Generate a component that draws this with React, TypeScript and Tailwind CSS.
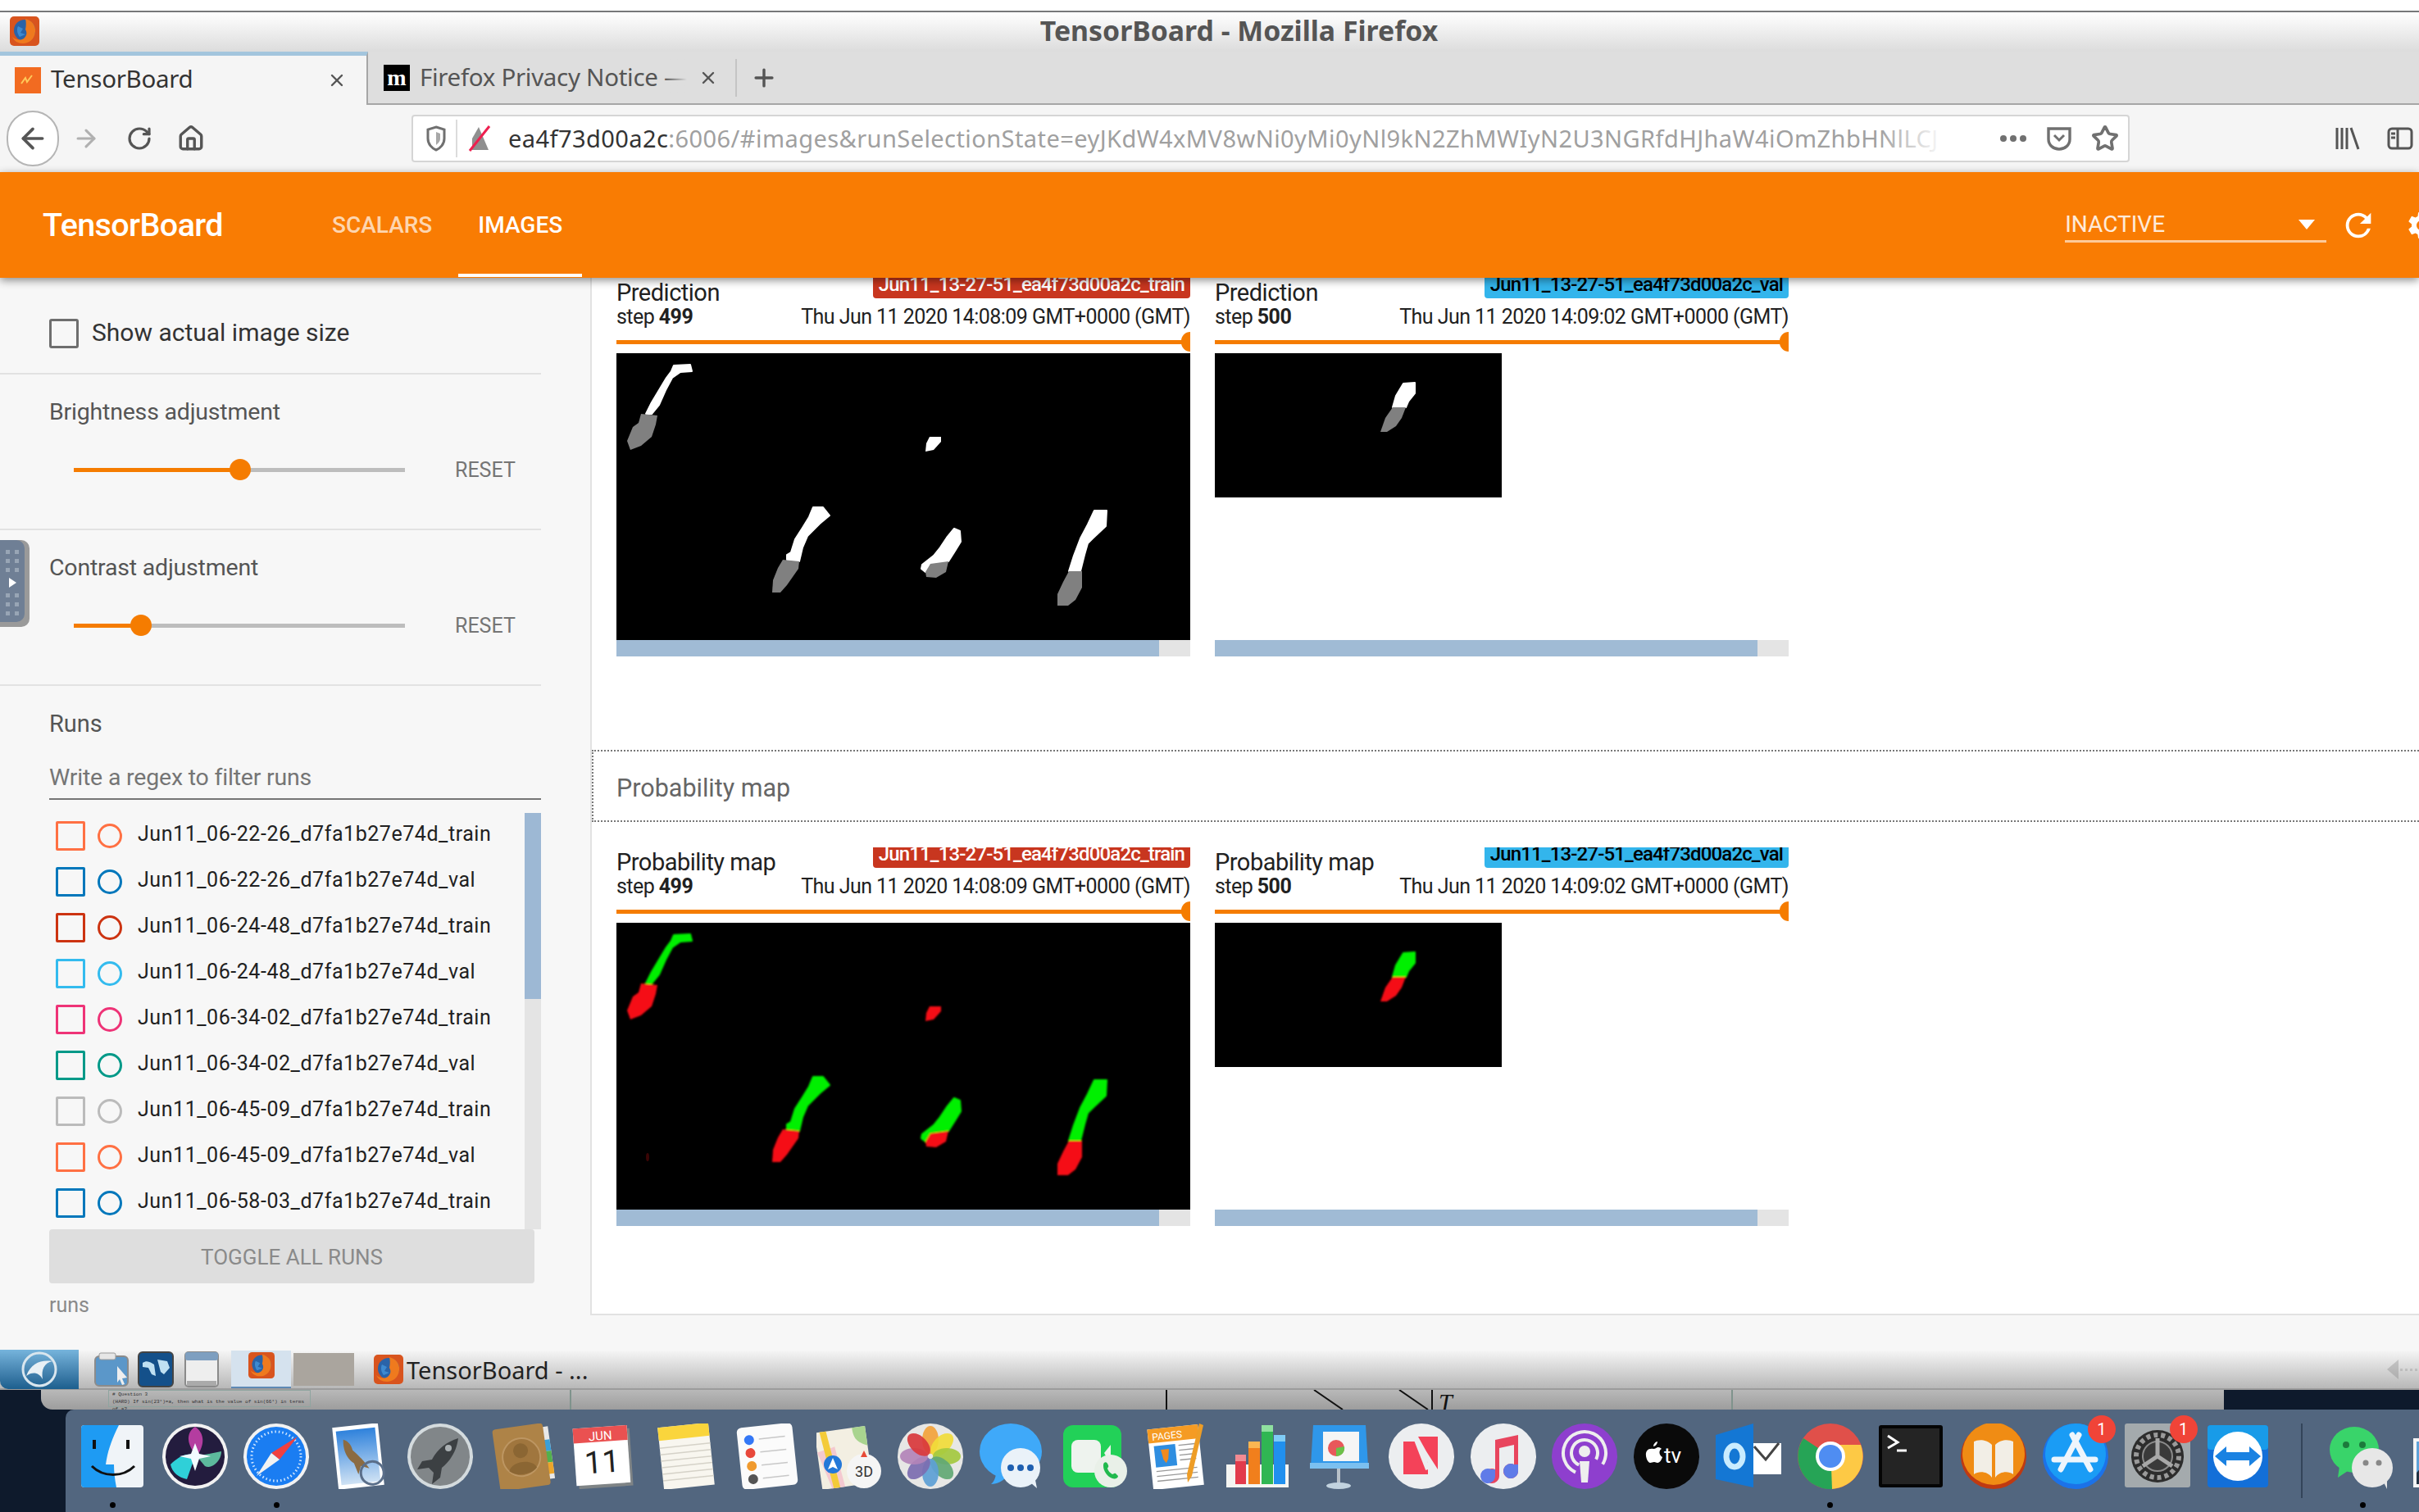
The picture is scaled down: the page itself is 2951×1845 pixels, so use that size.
import { ArrowLeft, ArrowRight, Home, Plus, RotateCw, Star, X } from 'lucide-react';
import { MdRefresh, MdSettings } from 'react-icons/md';
import type { ReactNode } from 'react';

const ROBOTO = "font-['Roboto',sans-serif]";
const UBUNTU = "font-['Noto_Sans',sans-serif]";

const RUNS = [
  { name: 'Jun11_06-22-26_d7fa1b27e74d_train', color: '#ff7043' },
  { name: 'Jun11_06-22-26_d7fa1b27e74d_val', color: '#0077bb' },
  { name: 'Jun11_06-24-48_d7fa1b27e74d_train', color: '#cc3311' },
  { name: 'Jun11_06-24-48_d7fa1b27e74d_val', color: '#33bbee' },
  { name: 'Jun11_06-34-02_d7fa1b27e74d_train', color: '#ee3377' },
  { name: 'Jun11_06-34-02_d7fa1b27e74d_val', color: '#009988' },
  { name: 'Jun11_06-45-09_d7fa1b27e74d_train', color: '#bbbbbb' },
  { name: 'Jun11_06-45-09_d7fa1b27e74d_val', color: '#ff7043' },
  { name: 'Jun11_06-58-03_d7fa1b27e74d_train', color: '#0077bb' },
];

type Blade = { up: string; low: string; spot?: boolean };

// blade outlines in picture pixels
const WIDE_BLADES: Blade[] = [
  {
    up: '70,15 90,14 92,22 78,23 68,30 60,45 52,63 43,74 36,74 43,60 52,45 61,30 67,22',
    low: '30,74 50,76 48,87 43,102 30,113 17,118 13,107 20,90 27,85',
  },
  { up: '', low: '382,102 396,102 396,108 387,118 377,120 378,110', spot: true },
  {
    up: '240,188 252,188 260,198 248,208 233,223 227,237 223,254 208,252 208,246 213,243 218,227 227,213 235,200',
    low: '203,252 223,254 222,263 208,283 200,292 190,292 191,277 197,262',
  },
  {
    up: '412,214 419,217 420,230 412,243 405,254 383,257 377,267 372,263 373,258 387,247 395,237 403,225',
    low: '383,257 405,254 402,267 390,274 378,273 377,267',
  },
  {
    up: '583,192 598,192 597,211 581,226 575,232 571,246 566,266 552,266 558,247 566,226 575,209',
    low: '552,266 568,266 568,286 560,301 551,308 538,308 538,294 545,279',
  },
];

const NARROW_BLADES: Blade[] = [
  {
    up: '230,37 244,36 244,49 236,59 233,66 217,66 221,52',
    low: '217,66 233,66 228,79 221,89 210,96 202,96 208,79',
  },
];

function BladePicture({ wide, map }: { wide: boolean; map: boolean }) {
  const blades = wide ? WIDE_BLADES : NARROW_BLADES;
  const upper = map ? '#00f000' : '#ffffff';
  const lower = map ? '#f50a14' : '#808080';
  const blurId = map ? 'blur-map' : 'blur-pred';
  return (
    <svg
      viewBox={wide ? '0 0 700 350' : '0 0 350 176'}
      className={wide ? 'block w-[700px] h-[350px] bg-black' : 'block w-[350px] h-[176px] bg-black'}
    >
      <filter id={blurId}>
        <feGaussianBlur stdDeviation={map ? 1 : 0.4} />
      </filter>
      <g filter={`url(#${blurId})`}>
        {blades.map((b, i) => (
          <g key={i}>
            {b.up && <polygon points={b.up} fill={upper} stroke={upper} strokeWidth="2" strokeLinejoin="round" />}
            <polygon points={b.low} fill={b.spot && !map ? '#ffffff' : lower} />
          </g>
        ))}
      </g>
      {map && wide && <ellipse cx="38" cy="286" rx="2" ry="5" fill="#3a0505" />}
    </svg>
  );
}

function ImageCard({
  title,
  step,
  date,
  tag,
  tagClass,
  wide,
  map,
}: {
  title: string;
  step: number;
  date: string;
  tag: string;
  tagClass: string;
  wide: boolean;
  map: boolean;
}) {
  return (
    <div className={`w-[700px] ${ROBOTO} text-[#212121]`}>
      <div className="flex justify-between h-[33px]">
        <div className="text-[29px] leading-[36px] tracking-[-0.5px]">{title}</div>
        <div className={`h-[25px] overflow-hidden rounded-b-[4px] px-[7px] text-[24px] leading-[16px] font-medium tracking-[-0.85px] ${tagClass}`}>
          {tag}
        </div>
      </div>
      <div className="flex justify-between h-[30px] text-[25px] leading-[30px] tracking-[-0.55px]">
        <div>
          step <span className="font-bold">{step}</span>
        </div>
        <div>{date}</div>
      </div>
      <div className="relative h-[29px] flex items-center">
        <div className="w-full h-[5px] mt-[1px] bg-[#f57c00]" />
        <div className="absolute right-0 top-[3px] w-[11px] h-[24px] rounded-l-full bg-[#f57c00]" />
      </div>
      <div className="h-[350px] bg-white">
        <BladePicture wide={wide} map={map} />
      </div>
      <div className="h-[20px] bg-[#e4e4e4]">
        <div className="w-[662px] h-full bg-[#a0bbd5]" />
      </div>
    </div>
  );
}

function CardRow({ title, map }: { title: string; map: boolean }) {
  return (
    <div className="flex gap-[30px] pl-[30px]">
      <ImageCard
        title={title}
        step={499}
        date="Thu Jun 11 2020 14:08:09 GMT+0000 (GMT)"
        tag="Jun11_13-27-51_ea4f73d00a2c_train"
        tagClass="bg-[#c8361f] text-white"
        wide
        map={map}
      />
      <ImageCard
        title={title}
        step={500}
        date="Thu Jun 11 2020 14:09:02 GMT+0000 (GMT)"
        tag="Jun11_13-27-51_ea4f73d00a2c_val"
        tagClass="bg-[#33b5ec] text-black"
        wide={false}
        map={map}
      />
    </div>
  );
}

function AdjustSlider({ label, value }: { label: string; value: number }) {
  return (
    <div className="h-[190px] w-[660px] border-b-2 border-[#e2e2e2] pl-[60px] pt-[29px]">
      <div className="text-[28.5px] leading-[34px] text-[#555] tracking-[-0.2px]">{label}</div>
      <div className="flex items-center mt-[35px] pl-[30px]">
        <div className="relative w-[404px] h-[5px] bg-[#bdbdbd]">
          <div className="h-full bg-[#f57c00]" style={{ width: value }} />
          <div
            className="absolute top-[-11px] w-[26px] h-[26px] -ml-[13px] rounded-full bg-[#f57c00]"
            style={{ left: value }}
          />
        </div>
        <div className="ml-[61px] text-[25px] text-[#757575]">RESET</div>
      </div>
    </div>
  );
}

function DotGrid() {
  return (
    <div className="grid grid-cols-2 gap-[6px]">
      {[0, 1, 2, 3, 4, 5].map(i => (
        <div key={i} className="w-[5px] h-[5px] bg-[#98a5b5]" />
      ))}
    </div>
  );
}

function Sidebar() {
  return (
    <div className={`relative w-[720px] shrink-0 ${ROBOTO}`}>
      <div className="h-[118px] w-[660px] border-b-2 border-[#e2e2e2] pl-[60px] pt-[50px] flex items-start gap-[16px]">
        <div className="w-[36px] h-[36px] rounded-[3px] border-[3px] border-[#6e6e6e]" />
        <div className="text-[30px] leading-[34px] text-[#333]">Show actual image size</div>
      </div>
      <AdjustSlider label="Brightness adjustment" value={203} />
      <AdjustSlider label="Contrast adjustment" value={82} />
      <div className="w-[660px] pl-[60px] pt-[29px]">
        <div className="text-[29px] leading-[34px] text-[#555]">Runs</div>
        <div className="mt-[31px] h-[45px] border-b-2 border-[#757575] text-[28.5px] leading-[36px] text-[#757575] tracking-[-0.2px]">
          Write a regex to filter runs
        </div>
        <div className="flex h-[508px] mt-[16px]">
          <div className="flex-1 pl-[8px]">
            {RUNS.map(r => (
              <div key={r.name} className="flex items-center h-[56px]">
                <div className="w-[36px] h-[36px] rounded-[2px] border-[3px]" style={{ borderColor: r.color }} />
                <div className="w-[30px] h-[30px] ml-[15px] rounded-full border-[3px]" style={{ borderColor: r.color }} />
                <div className="ml-[19px] -mt-[4px] text-[25px] text-[#212121] tracking-[0.55px]">{r.name}</div>
              </div>
            ))}
          </div>
          <div className="w-[20px] bg-[#e4e4e4]">
            <div className="h-[227px] bg-[#9db8d4]" />
          </div>
        </div>
        <div className="flex items-center justify-center w-[592px] h-[66px] pt-[2px] rounded-[4px] bg-[#dedede] text-[26px] text-[#8a8a8a]">
          TOGGLE ALL RUNS
        </div>
        <div className="mt-[8px] text-[25px] text-[#8a8a8a]">runs</div>
      </div>

      {/* side handle of the remote desktop client */}
      <div className="absolute left-0 top-[320px] w-[36px] h-[106px] rounded-r-[10px] bg-[#9a9a9a]">
        <div className="flex flex-col items-center gap-[6px] w-[30px] h-[100px] pt-[12px] rounded-r-[10px] bg-[#6f7f95]">
          <DotGrid />
          <div className="w-0 h-0 my-[1px] border-y-[6px] border-y-transparent border-l-[9px] border-l-white" />
          <DotGrid />
        </div>
      </div>
    </div>
  );
}

function MainPane() {
  return (
    <div className="flex-1 h-[1266px] overflow-hidden bg-white border-l-2 border-b-2 border-[#e2e2e2]">
      <CardRow title="Prediction" map={false} />
      <div
        className={`mt-[114px] h-[88px] flex items-center pl-[28px] pt-[6px] border-2 border-r-0 border-dotted border-[#777] text-[30.5px] text-[#666] ${ROBOTO}`}
      >
        Probability map
      </div>
      <div className="mt-[31px]">
        <CardRow title="Probability map" map />
      </div>
    </div>
  );
}

function FirefoxIcon({ size }: { size: number }) {
  return (
    <svg width={size} height={size} viewBox="0 0 36 36">
      <rect width="36" height="36" rx="5" fill="#d8541e" />
      <circle cx="18" cy="17" r="13" fill="#2a63a8" />
      <path d="M19 3c8 2 13 8 12 16-1 9-8 14-15 14-6 0-11-3-13-8 4 4 11 5 15 1 3-3 3-7 1-10 1-5 1-9 0-13z" fill="#ef7a1e" />
      <path d="M10 12l6 3-3 5 6 2-7 3c-3-4-4-9-2-13z" fill="#3d8ad0" />
    </svg>
  );
}

function TitleBar() {
  return (
    <div className="h-[63px] bg-white">
      <div className="h-[13px]" />
      <div className="relative flex items-center justify-center h-[50px] pl-[72px] pb-[2px] border-t-2 border-[#77787a] bg-gradient-to-b from-white to-[#dcdcdc]">
        <div className="absolute left-[12px] top-[5px]">
          <FirefoxIcon size={36} />
        </div>
        <span className={`${UBUNTU} font-bold text-[33.8px] leading-none text-[#555]`}>TensorBoard - Mozilla Firefox</span>
      </div>
    </div>
  );
}

function TabStrip() {
  return (
    <div className={`flex h-[65px] bg-[#dedede] border-b-2 border-[#a6a6a6] ${UBUNTU}`}>
      <div className="flex items-center w-[449px] h-[65px] pl-[18px] pr-[24px] bg-[#f5f5f5] border-t-[5px] border-t-[#a3c5dd] border-r-2 border-r-[#a6a6a6]">
        <svg width="32" height="32" viewBox="0 0 32 32">
          <rect width="32" height="32" fill="#f26b21" />
          <path d="M8 20l5-7 2 5 6-8" stroke="#ffc95a" strokeWidth="2" fill="none" />
        </svg>
        <span className="ml-[12px] flex-1 -mt-[3px] text-[29.5px] text-[#333] tracking-[-0.3px]">TensorBoard</span>
        <X size={24} color="#555" strokeWidth={2.4} />
      </div>
      <div className="flex items-center pl-[19px]">
        <div className="flex items-center justify-center w-[32px] h-[32px] bg-black text-white font-['Liberation_Serif',serif] font-bold text-[28px] leading-none">
          m
        </div>
        <span className="relative ml-[12px] w-[326px] overflow-hidden whitespace-nowrap text-[29.5px] text-[#555] tracking-[-0.3px]">
          Firefox Privacy Notice —
          <div className="absolute right-0 top-0 h-full w-[28px] bg-gradient-to-r from-transparent to-[#dedede]" />
        </span>
        <X size={24} color="#555" strokeWidth={2.4} className="ml-[14px]" />
        <div className="w-[2px] h-[46px] ml-[21px] bg-[#c4c4c4]" />
        <Plus size={34} color="#555" strokeWidth={2.4} className="ml-[16px]" />
      </div>
    </div>
  );
}

function Toolbar() {
  return (
    <div className={`flex items-center h-[82px] pl-[8px] bg-[#f5f5f5] ${UBUNTU}`}>
      <div className="flex items-center justify-center w-[64px] h-[68px] rounded-full bg-white border-2 border-[#b5b5b5]">
        <ArrowLeft size={40} color="#555" strokeWidth={2.2} />
      </div>
      <ArrowRight size={34} color="#b0b0b0" strokeWidth={2.2} className="ml-[16px]" />
      <RotateCw size={32} color="#555" strokeWidth={2.4} className="ml-[32px]" />
      <Home size={34} color="#555" strokeWidth={2.4} className="ml-[30px]" />
      <div className="relative flex items-center w-[2096px] h-[58px] ml-[252px] rounded-[4px] bg-white border-2 border-[#d5d5d5]">
        <svg width="24" height="32" viewBox="0 0 24 32" className="ml-[16px]">
          <path d="M12 2l10 3v11c0 7-5 12-10 14C7 28 2 23 2 16V5z" fill="none" stroke="#707070" strokeWidth="3" />
          <path d="M12 8l5 2v6c0 4-3 6-5 8z" fill="#a8a8a8" />
        </svg>
        <div className="w-[2px] h-[46px] ml-[12px] bg-[#dcdcdc]" />
        <svg width="30" height="36" viewBox="0 0 30 36" className="ml-[12px]">
          <path d="M6 32V18l8-14 12 28z" fill="#8f8f8f" />
          <path d="M3 33L27 3" stroke="#ee1f4f" strokeWidth="3" />
        </svg>
        <div className="relative ml-[20px] w-[1752px] overflow-hidden whitespace-nowrap text-[29px] leading-[36px] tracking-[0.43px] text-[#a0a0a0]">
          <span className="text-[#333]">ea4f73d00a2c</span>:6006/#images&runSelectionState=eyJKdW4xMV8wNi0yMi0yNl9kN2ZhMWIyN2U3NGRfdHJhaW4iOmZhbHNlLCJ
          <div className="absolute right-0 top-0 h-full w-[80px] bg-gradient-to-r from-transparent to-white" />
        </div>
        <div className="flex items-center ml-[68px]">
          <div className="flex gap-[4px]">
            <div className="w-[8px] h-[8px] rounded-full bg-[#707070]" />
            <div className="w-[8px] h-[8px] rounded-full bg-[#707070]" />
            <div className="w-[8px] h-[8px] rounded-full bg-[#707070]" />
          </div>
          <svg width="32" height="32" viewBox="0 0 32 32" className="ml-[24px]">
            <path d="M3 4h26v13c0 7-6 12-13 12S3 24 3 17z" fill="none" stroke="#707070" strokeWidth="3.4" />
            <path d="M10 12l6 6 6-6" fill="none" stroke="#707070" strokeWidth="3" />
          </svg>
          <Star size={34} color="#707070" strokeWidth={2.6} className="ml-[23px]" />
        </div>
      </div>
      <svg width="32" height="30" viewBox="0 0 32 30" className="ml-[250px]">
        <path d="M3 2v26M9 2v26M15 2v26M20 2l9 26" stroke="#555" strokeWidth="3" />
      </svg>
      <svg width="32" height="30" viewBox="0 0 32 30" className="ml-[32px]">
        <rect x="2" y="3" width="28" height="24" rx="4" fill="none" stroke="#555" strokeWidth="3" />
        <path d="M13 3v24M5 9h5M5 14h5" stroke="#555" strokeWidth="3" />
      </svg>
    </div>
  );
}

function TensorBoardHeader() {
  return (
    <div className={`relative z-10 flex items-center h-[129px] pl-[52px] bg-[#f97c03] shadow-[0_3px_10px_rgba(0,0,0,0.45)] ${ROBOTO}`}>
      <div className="w-[353px] shrink-0 text-[39.5px] font-medium tracking-[-0.6px] text-white">TensorBoard</div>
      <div className="shrink-0 text-[28px] font-medium text-white/70">SCALARS</div>
      <div className="relative shrink-0 ml-[56px] text-[28px] font-medium text-white">
        IMAGES
        <div className="absolute left-[-24px] right-[-24px] top-[80px] h-[4px] bg-white" />
      </div>
      <div className="shrink-0 ml-[1833px] w-[319px] mt-[-1px]">
        <div className="flex items-center justify-between h-[44px] pt-[2px] pr-[14px] border-b-[3px] border-white/60">
          <span className="text-[28px] text-white/85">INACTIVE</span>
          <div className="w-0 h-0 border-x-[10px] border-x-transparent border-t-[12px] border-t-white" />
        </div>
      </div>
      <MdRefresh size={46} color="white" className="ml-[16px] shrink-0" />
      <MdSettings size={40} color="white" className="ml-[34px] shrink-0" />
    </div>
  );
}

function Taskbar() {
  return (
    <div className="flex items-center h-[48px] bg-gradient-to-b from-[#f5f5f5] to-[#b8b8b8] border-b-2 border-[#9c9c9c]">
      <div className="flex items-center justify-center w-[96px] h-[48px] rounded-bl-[10px] bg-gradient-to-b from-[#76b4dc] to-[#1c5f8e]">
        <svg width="44" height="44" viewBox="0 0 44 44">
          <circle cx="22" cy="22" r="20" fill="none" stroke="#d9e6ee" strokeWidth="3" />
          <path d="M6 30C12 14 24 10 38 12 28 14 24 22 26 34 22 26 14 24 6 30z" fill="#e8f0f5" />
        </svg>
      </div>
      <svg width="42" height="44" viewBox="0 0 42 44" className="ml-[19px]">
        <rect x="1" y="6" width="40" height="36" rx="5" fill="#5b97c9" stroke="#8b8b8b" strokeWidth="2" />
        <rect x="6" y="2" width="20" height="8" rx="2" fill="#e6e6e6" stroke="#9a9a9a" />
        <path d="M28 18l12 14-6 1 3 7-3 1-3-7-3 4z" fill="#eee" />
      </svg>
      <svg width="44" height="44" viewBox="0 0 44 44" className="ml-[11px]">
        <rect x="1" y="1" width="42" height="42" rx="5" fill="#14508a" stroke="#444" strokeWidth="2" />
        <path d="M6 14c6-4 10 0 14 2l2 14-5-2-4-8-7-1zM24 10l12 2 3 8-7 8-4-3z" fill="#bfe0f2" />
      </svg>
      <svg width="42" height="44" viewBox="0 0 42 44" className="ml-[13px]">
        <rect x="1" y="1" width="40" height="42" rx="4" fill="#eee" stroke="#8a8a8a" strokeWidth="2" />
        <rect x="1" y="1" width="40" height="10" rx="3" fill="#7e9fc0" />
        <rect x="3" y="36" width="36" height="6" fill="#aaa" />
      </svg>
      <div className="flex flex-col justify-between items-center w-[73px] h-[46px] ml-[15px] bg-[#d5e2ee] border-b-2 border-[#5e89b4]">
        <div className="mt-[2px]">
          <FirefoxIcon size={32} />
        </div>
      </div>
      <div className="w-[74px] h-[40px] ml-[3px] bg-[#aaa59e]" />
      <div className="ml-[24px]">
        <FirefoxIcon size={36} />
      </div>
      <span className={`ml-[4px] text-[29px] leading-none text-[#222] ${UBUNTU}`}>TensorBoard - ...</span>
      <div className="ml-auto mr-[2px] flex items-center opacity-30">
        <div className="w-0 h-0 border-y-[12px] border-y-transparent border-r-[14px] border-r-[#777]" />
        <div className="flex gap-[3px] ml-[2px]">
          <div className="w-[3px] h-[3px] bg-[#888]" />
          <div className="w-[3px] h-[3px] bg-[#888]" />
          <div className="w-[3px] h-[3px] bg-[#888]" />
          <div className="w-[3px] h-[3px] bg-[#888]" />
        </div>
      </div>
    </div>
  );
}

function DesktopStrip() {
  return (
    <div className="h-[24px] pl-[50px] pr-[238px] bg-[#0e1a2c]">
      <div className="relative h-full overflow-hidden rounded-bl-[14px] bg-gradient-to-b from-[#b9b9b9] to-[#9d9d9d]">
        <div className="absolute left-[82px] top-0 w-[247px] h-[21px] border border-[#8fa5a0] px-[4px] font-['Liberation_Mono',monospace] text-[6px] leading-[9px] text-[#333]">
          # Question 3
          <br />
          (HARD) If sin(23°)=a, then what is the value of sin(66°) in terms of a?
        </div>
        <svg width="2663" height="24" className="absolute left-0 top-0">
          <path d="M1373 0v24M1553 0l35 24M1657 0l35 24M1697 0v24" stroke="#111" strokeWidth="2" />
          <path d="M646 0v24M2063 0v24" stroke="#7f938c" strokeWidth="2" />
        </svg>
        <span className="absolute left-[1705px] -top-[8px] font-['Liberation_Serif',serif] italic text-[30px] text-[#111]">T</span>
      </div>
    </div>
  );
}

function Badge({ children }: { children: ReactNode }) {
  return (
    <div className="absolute -top-[10px] -right-[9px] flex items-center justify-center w-[34px] h-[34px] rounded-full bg-[#f04438] text-white text-[20px] font-['Roboto',sans-serif]">
      {children}
    </div>
  );
}

function DockIcon({ children, running, badge }: { children: ReactNode; running?: boolean; badge?: string }) {
  return (
    <div className="flex flex-col items-center w-[99.75px] shrink-0 pt-[17px]">
      <div className="relative w-[80px] h-[80px]">
        <svg width="80" height="80" viewBox="0 0 80 80">
          {children}
        </svg>
        {badge && <Badge>{badge}</Badge>}
      </div>
      <div className={`w-[7px] h-[7px] mt-[16px] rounded-full ${running ? 'bg-black' : ''}`} />
    </div>
  );
}

function Dock() {
  return (
    <div className="flex-1 pl-[80px] bg-[#0e1a2c] overflow-hidden">
      <div className="flex h-full pl-[8px] bg-[#52667f] rounded-tl-[10px]">
        <DockIcon running>
          <rect x="1" y="2" width="76" height="76" rx="4" fill="#f0f4f8" />
          <path d="M5 2h42C38 20 33 35 31 50h10c0 9 1 18 3 28H5a4 4 0 0 1-4-4V6a4 4 0 0 1 4-4z" fill="#1e9bf3" />
          <path d="M17 20v11M58 20v11" stroke="#111" strokeWidth="4" />
          <path d="M14 52c14 14 38 14 52 0" fill="none" stroke="#111" strokeWidth="3" />
        </DockIcon>
        <DockIcon>
          <circle cx="40" cy="40" r="40" fill="#f2f2f2" />
          <circle cx="40" cy="40" r="36" fill="#231c3e" />
          <path d="M40 4c12 8 12 22 2 36C30 26 28 12 40 4z" fill="#b43da0" />
          <path d="M10 50c14-14 24-14 30-10L30 68C20 66 12 60 10 50z" fill="#2fd0d8" />
          <path d="M42 40l30-6c0 12-12 22-20 18z" fill="#5dba9d" />
          <path d="M40 24l5 13 14 3-14 3-5 15-5-15-14-3 14-3z" fill="#f2fbff" />
        </DockIcon>
        <DockIcon running>
          <circle cx="40" cy="40" r="40" fill="#f2f2f2" />
          <circle cx="40" cy="40" r="36" fill="#1a7df2" />
          <circle cx="40" cy="40" r="30" fill="none" stroke="#cfe6ff" strokeWidth="3" strokeDasharray="1.5 3" />
          <path d="M66 16L44 44 34 36z" fill="#f04040" />
          <path d="M16 64L34 36 44 44z" fill="#f2f2f2" />
        </DockIcon>
        <DockIcon>
          <g transform="rotate(-6 40 40)">
            <rect x="12" y="2" width="56" height="76" fill="white" />
            <rect x="16" y="7" width="48" height="66" fill="url(#sky)" />
            <linearGradient id="sky" x1="0" y1="0" x2="0" y2="1">
              <stop offset="0" stopColor="#2f82dc" />
              <stop offset="1" stopColor="#cfe2f4" />
            </linearGradient>
            <path d="M24 18c6 2 9 8 10 14 6 6 12 14 18 24l-10-4-4 10-4-14C26 42 22 30 24 18z" fill="#8b6b42" />
            <circle cx="55" cy="62" r="14" fill="none" stroke="#5b6f8a" strokeWidth="3" />
          </g>
        </DockIcon>
        <DockIcon>
          <circle cx="40" cy="40" r="40" fill="#d4dbde" />
          <circle cx="40" cy="40" r="36" fill="#818689" />
          <path d="M62 18C48 22 36 32 30 44l-12 2-6 10 14-2 6 6-2 14 10-8 2-12c10-8 18-20 20-36z" fill="#3c4043" />
          <circle cx="50" cy="30" r="4" fill="#aab0b3" />
        </DockIcon>
        <DockIcon>
          <g transform="rotate(-8 40 40)">
            <rect x="68" y="8" width="8" height="64" fill="#e8e8e8" />
            <rect x="68" y="24" width="8" height="14" fill="#3aa0d8" />
            <rect x="68" y="38" width="8" height="14" fill="#52b04c" />
            <rect x="68" y="52" width="8" height="14" fill="#eca52a" />
            <rect x="8" y="3" width="62" height="76" rx="4" fill="#ae8347" />
            <circle cx="39" cy="41" r="23" fill="#a0763e" stroke="#bd9662" strokeWidth="2" />
            <circle cx="39" cy="33" r="9" fill="#8b6633" />
            <path d="M22 56c4-12 30-12 34 0-8 8-26 8-34 0z" fill="#8b6633" />
          </g>
        </DockIcon>
        <DockIcon>
          <g transform="rotate(-4 40 40)">
            <rect x="8" y="8" width="66" height="70" fill="#7f8486" />
            <rect x="5" y="4" width="66" height="70" fill="white" />
            <path d="M5 4h66v18H5z" fill="#ea5151" />
            <text x="38" y="20" textAnchor="middle" fontFamily="Roboto, sans-serif" fontSize="15" fill="white">
              JUN
            </text>
            <text x="38" y="60" textAnchor="middle" fontFamily="Roboto, sans-serif" fontSize="38" fill="#222">
              11
            </text>
          </g>
        </DockIcon>
        <DockIcon>
          <g transform="rotate(-6 40 40)">
            <rect x="10" y="2" width="62" height="76" fill="#f8f6ef" />
            <rect x="10" y="2" width="62" height="16" fill="#fad53c" />
            <path d="M10 27h62M10 35h62M10 43h62M10 51h62M10 59h62M10 67h62" stroke="#d5d2c8" strokeWidth="1.5" />
          </g>
        </DockIcon>
        <DockIcon>
          <g transform="rotate(-6 40 40)">
            <rect x="6" y="2" width="68" height="76" rx="6" fill="#fbfbfb" />
            <circle cx="20" cy="18" r="6" fill="#3478f6" />
            <circle cx="20" cy="34" r="6" fill="#e8483b" />
            <circle cx="20" cy="50" r="6" fill="#f09a2e" />
            <circle cx="20" cy="66" r="6" fill="#555" />
            <path d="M32 18h32M32 34h32M32 50h32M32 66h32" stroke="#c8c8c8" strokeWidth="1.5" />
          </g>
        </DockIcon>
        <DockIcon>
          <g transform="rotate(-8 40 40)">
            <rect x="2" y="6" width="62" height="70" fill="#f3efe2" />
            <path d="M32 6h16c0 14 4 18 16 24V6z" fill="#a9d48f" />
            <path d="M2 30l22-4 6 50H14z" fill="#f4c9d0" />
            <path d="M8 6h8l8 70h-8z" fill="#f3cb39" />
          </g>
          <circle cx="58" cy="58" r="21" fill="#f5f5f5" />
          <text x="58" y="65" textAnchor="middle" fontFamily="Roboto, sans-serif" fontSize="18" fill="#333">
            3D
          </text>
          <circle cx="20" cy="50" r="11" fill="#2478d8" />
          <path d="M20 42l6 14-6-3-6 3z" fill="white" />
          <path d="M58 33l4 8h-8z" fill="#e84a36" />
        </DockIcon>
        <DockIcon>
          <circle cx="40" cy="40" r="40" fill="#e7e7e5" />
          {[
            ['#f3a33b', 0],
            ['#f1dc3a', 45],
            ['#a4c93f', 90],
            ['#62a874', 135],
            ['#5d9fd5', 180],
            ['#7c6cb0', 225],
            ['#b384b8', 270],
            ['#d9383c', 315],
          ].map(([c, r]) => (
            <ellipse key={c as string} cx="40" cy="20" rx="10" ry="17" fill={c as string} opacity="0.92" transform={`rotate(${r} 40 40)`} />
          ))}
        </DockIcon>
        <DockIcon>
          <ellipse cx="38" cy="34" rx="38" ry="34" fill="#3fa9f9" />
          <path d="M20 60c0 6-3 12-6 14 8 0 14-4 18-8z" fill="#3fa9f9" />
          <ellipse cx="50" cy="54" rx="24" ry="24" fill="#eaf2f9" />
          <path d="M62 72l8 7-2-10z" fill="#eaf2f9" />
          <circle cx="38" cy="54" r="4" fill="#1e5fb0" />
          <circle cx="50" cy="54" r="4" fill="#1e5fb0" />
          <circle cx="62" cy="54" r="4" fill="#1e5fb0" />
        </DockIcon>
        <DockIcon>
          <rect x="2" y="2" width="71" height="76" rx="12" fill="#22d158" />
          <rect x="12" y="20" width="36" height="40" rx="8" fill="#eef3ee" />
          <path d="M52 36l8-10v24z" fill="#eef3ee" />
          <ellipse cx="60" cy="58" rx="20" ry="20" fill="#e9f0e8" />
          <path d="M52 48c2-2 4 0 5 3 1 2-1 3-1 4 1 3 3 5 6 7 1 0 2-2 4-1l3 3c0 3-4 4-7 3-6-2-11-9-11-15 0-2 0-3 1-4z" fill="#21b94d" />
        </DockIcon>
        <DockIcon>
          <g transform="rotate(-6 40 40)">
            <rect x="8" y="4" width="62" height="74" fill="white" />
            <path d="M8 4h62v17H8z" fill="#f59b23" />
            <text x="13" y="18" fontFamily="Roboto, sans-serif" fontSize="12" fill="white">
              PAGES
            </text>
            <rect x="14" y="25" width="26" height="26" fill="#2f8ee0" />
            <path d="M22 30h10l-2 12-3 5-3-5z" fill="#f08a1e" />
            <path d="M44 27h20M44 33h20M44 39h20M44 45h20M14 56h50M14 62h50M14 68h50" stroke="#999" strokeWidth="1.4" />
          </g>
          <path d="M68 0l5 2-14 62-5 8-1-10z" fill="#ee9d26" />
        </DockIcon>
        <DockIcon>
          <rect x="2" y="50" width="76" height="28" fill="#f5f5f2" />
          <rect x="13" y="40" width="13" height="34" fill="#e23b4c" />
          <rect x="13" y="38" width="13" height="8" fill="#f28a92" />
          <rect x="29" y="24" width="14" height="50" fill="#f17f1c" />
          <rect x="29" y="22" width="14" height="8" fill="#fbb652" />
          <rect x="45" y="2" width="14" height="72" fill="#30b653" />
          <rect x="45" y="2" width="14" height="8" fill="#8fe09f" />
          <rect x="60" y="16" width="14" height="58" fill="#2190ee" />
          <rect x="60" y="14" width="14" height="8" fill="#7fccf6" />
        </DockIcon>
        <DockIcon>
          <path d="M8 2h64l3 50H5z" fill="#2f97ea" />
          <rect x="4" y="48" width="72" height="7" fill="#7cc0f0" />
          <rect x="20" y="10" width="44" height="36" fill="#f5f5f5" />
          <circle cx="36" cy="30" r="10" fill="#e8585a" />
          <path d="M36 30l10-2a10 10 0 0 1-10 12z" fill="#6cc04a" />
          <rect x="37" y="55" width="4" height="20" fill="#b8c1c9" />
          <ellipse cx="39" cy="76" rx="15" ry="4" fill="#c2d3df" />
        </DockIcon>
        <DockIcon>
          <circle cx="40" cy="40" r="40" fill="#eceef0" />
          <path d="M18 22h14l16 26 0 14H18zM36 16h24v40L46 34z" fill="#f44259" />
          <path d="M34 20l14 36" stroke="#eceef0" strokeWidth="6" />
        </DockIcon>
        <DockIcon>
          <circle cx="40" cy="40" r="40" fill="#eceef0" />
          <path d="M30 20l28-6v44a9 9 0 1 1-5-8V26l-18 4v34a9 9 0 1 1-5-8z" fill="#e8455e" />
          <path d="M30 56v8a9 9 0 1 1-5-8zM58 50v8a9 9 0 1 1-5-8z" fill="#5f7be8" />
        </DockIcon>
        <DockIcon>
          <circle cx="40" cy="40" r="40" fill="#8e3fce" />
          <circle cx="40" cy="36" r="26" fill="none" stroke="#eee" strokeWidth="4" strokeDasharray="125 40" transform="rotate(115 40 36)" />
          <circle cx="40" cy="36" r="16" fill="none" stroke="#eee" strokeWidth="4" strokeDasharray="76 25" transform="rotate(115 40 36)" />
          <circle cx="40" cy="34" r="7" fill="#eee" />
          <path d="M34 46h12l-2 26h-8z" fill="#eee" />
        </DockIcon>
        <DockIcon>
          <circle cx="40" cy="40" r="40" fill="#0a0a0a" />
          <path d="M24 31c3 0 4-2 6-2 2 0 3 1 4 2-4 2-3 8 1 10-1 3-3 7-6 7-2 0-2-1-4-1s-3 1-5 1c-5-1-10-19 4-17zM29 22c0 3-3 6-5 6 0-3 3-6 5-6z" fill="white" />
          <text x="37" y="48" fontFamily="Roboto, sans-serif" fontSize="26" fill="white">
            tv
          </text>
        </DockIcon>
        <DockIcon>
          <rect x="44" y="24" width="36" height="38" fill="white" />
          <path d="M47 28l14 16 16-20" fill="none" stroke="#444" strokeWidth="3" />
          <path d="M0 14L46 0v78L0 68z" fill="#1477d4" />
          <ellipse cx="23" cy="40" rx="10" ry="13" fill="none" stroke="#c9ecff" strokeWidth="7" />
        </DockIcon>
        <DockIcon running>
          <circle cx="40" cy="40" r="40" fill="#e0504a" />
          <path d="M40 40L7 18A40 40 0 0 0 44 80z" fill="#26a456" />
          <path d="M40 26h37A40 40 0 0 1 42 80z" fill="#fdc945" />
          <circle cx="40" cy="40" r="18" fill="white" />
          <circle cx="40" cy="40" r="14" fill="#4f8df2" />
        </DockIcon>
        <DockIcon>
          <rect x="0" y="2" width="78" height="76" rx="3" fill="#050505" />
          <rect x="4" y="6" width="70" height="68" fill="#242424" />
          <path d="M11 15l12 8-12 7" fill="none" stroke="white" strokeWidth="3" />
          <path d="M22 33h12" stroke="white" strokeWidth="3" />
        </DockIcon>
        <DockIcon>
          <circle cx="40" cy="40" r="40" fill="#bf3a11" />
          <circle cx="40" cy="37" r="38" fill="#f08c14" />
          <path d="M38 26c-8-8-18-6-22-4v40c6-4 16-4 22 4zM42 26c8-8 18-6 22-4v40c-6-4-16-4-22 4z" fill="#f2eee6" />
        </DockIcon>
        <DockIcon badge="1">
          <circle cx="40" cy="40" r="40" fill="#1c72e8" />
          <circle cx="40" cy="37" r="37" fill="#1a9cf5" />
          <path d="M36 14l22 42M44 14L22 56" stroke="#eef5fc" strokeWidth="7" strokeLinecap="round" />
          <path d="M14 44h50" stroke="#eef5fc" strokeWidth="7" strokeLinecap="round" />
        </DockIcon>
        <DockIcon badge="1">
          <rect x="0" y="0" width="80" height="78" rx="3" fill="#a4aaad" />
          <circle cx="40" cy="40" r="32" fill="#2d2d2d" />
          <circle cx="40" cy="40" r="26" fill="none" stroke="#9a9a9a" strokeWidth="6" strokeDasharray="5 4" />
          <circle cx="40" cy="40" r="18" fill="#3a3a3a" stroke="#8b8b8b" strokeWidth="2" />
          <path d="M40 40V18M40 40L22 52M40 40l18 12" stroke="#a8a8a8" strokeWidth="5" />
        </DockIcon>
        <DockIcon>
          <rect x="2" y="2" width="74" height="76" rx="4" fill="#136fd8" />
          <rect x="2" y="2" width="74" height="30" rx="4" fill="#189be8" />
          <circle cx="39" cy="40" r="30" fill="white" />
          <path d="M11 40l14-12v7h28v-7l14 12-14 12v-7H25v7z" fill="#1a82e2" />
        </DockIcon>
        <div className="w-[2px] h-[91px] mt-[17px] ml-[26px] mr-[23px] shrink-0 bg-[#33445a]" />
        <DockIcon running>
          <ellipse cx="30" cy="32" rx="30" ry="28" fill="#39d46a" />
          <path d="M12 52l-2 14 12-8z" fill="#39d46a" />
          <circle cx="20" cy="26" r="4" fill="#1c7a3c" />
          <circle cx="40" cy="26" r="4" fill="#1c7a3c" />
          <ellipse cx="52" cy="54" rx="25" ry="24" fill="#e7e7e7" />
          <path d="M66 72l4 8 0-12z" fill="#e7e7e7" />
          <circle cx="44" cy="48" r="3.5" fill="#888" />
          <circle cx="60" cy="48" r="3.5" fill="#888" />
        </DockIcon>
        <DockIcon>
          <rect x="18" y="0" width="62" height="60" fill="#e8e8e8" />
          <rect x="2" y="18" width="78" height="60" fill="#f5f5f5" />
          <rect x="6" y="22" width="72" height="52" fill="#5ea2d8" />
          <path d="M6 60l20-22 22 36H6z" fill="#234" />
        </DockIcon>
      </div>
    </div>
  );
}

export default function App() {
  return (
    <div className="flex flex-col w-[2951px] h-[1845px] overflow-hidden bg-[#f5f5f5]">
      <TitleBar />
      <TabStrip />
      <Toolbar />
      <TensorBoardHeader />
      <div className="flex h-[1309px] bg-[#f7f7f7]">
        <Sidebar />
        <MainPane />
      </div>
      <Taskbar />
      <DesktopStrip />
      <Dock />
    </div>
  );
}
